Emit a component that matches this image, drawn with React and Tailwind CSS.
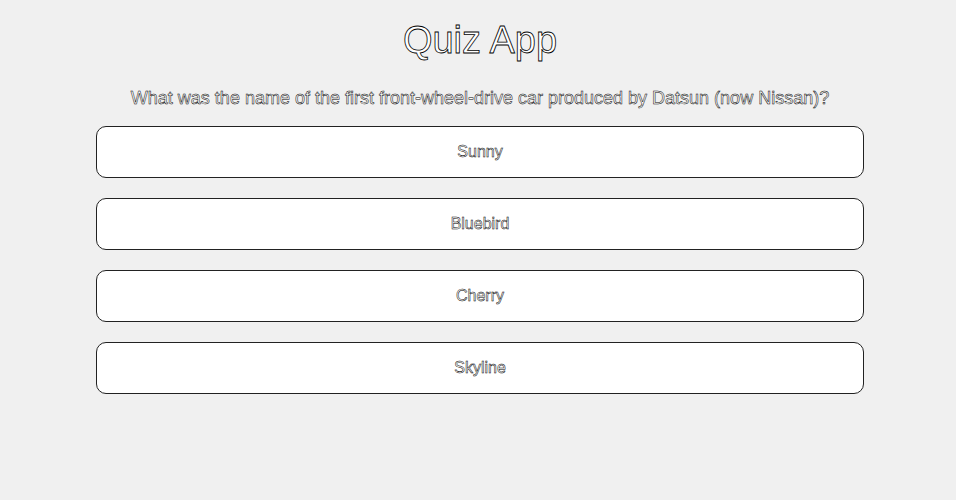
export default function App() {
  const answers = ["Sunny", "Bluebird", "Cherry", "Skyline"];

  return (
    <main className="min-h-screen bg-[#f0f0f0] pt-5 pl-1 font-['Liberation_Sans',Arial,sans-serif]">
      <div className="max-w-3xl mx-auto flex flex-col items-center">
        <h1 className="text-[38px] leading-10 text-white [-webkit-text-stroke:0.8px_#000] mb-6">
          Quiz App
        </h1>
        <p className="text-lg leading-7 text-white [-webkit-text-stroke:0.5px_#000] mb-[14px]">
          What was the name of the first front-wheel-drive car produced by
          Datsun (now Nissan)?
        </p>
        <div className="w-full flex flex-col gap-5">
          {answers.map((a) => (
            <button
              key={a}
              className="w-full bg-white border border-[#222] rounded-[10px] py-[13px] text-base leading-6 text-white [-webkit-text-stroke:0.5px_#000]"
            >
              {a}
            </button>
          ))}
        </div>
      </div>
    </main>
  );
}
